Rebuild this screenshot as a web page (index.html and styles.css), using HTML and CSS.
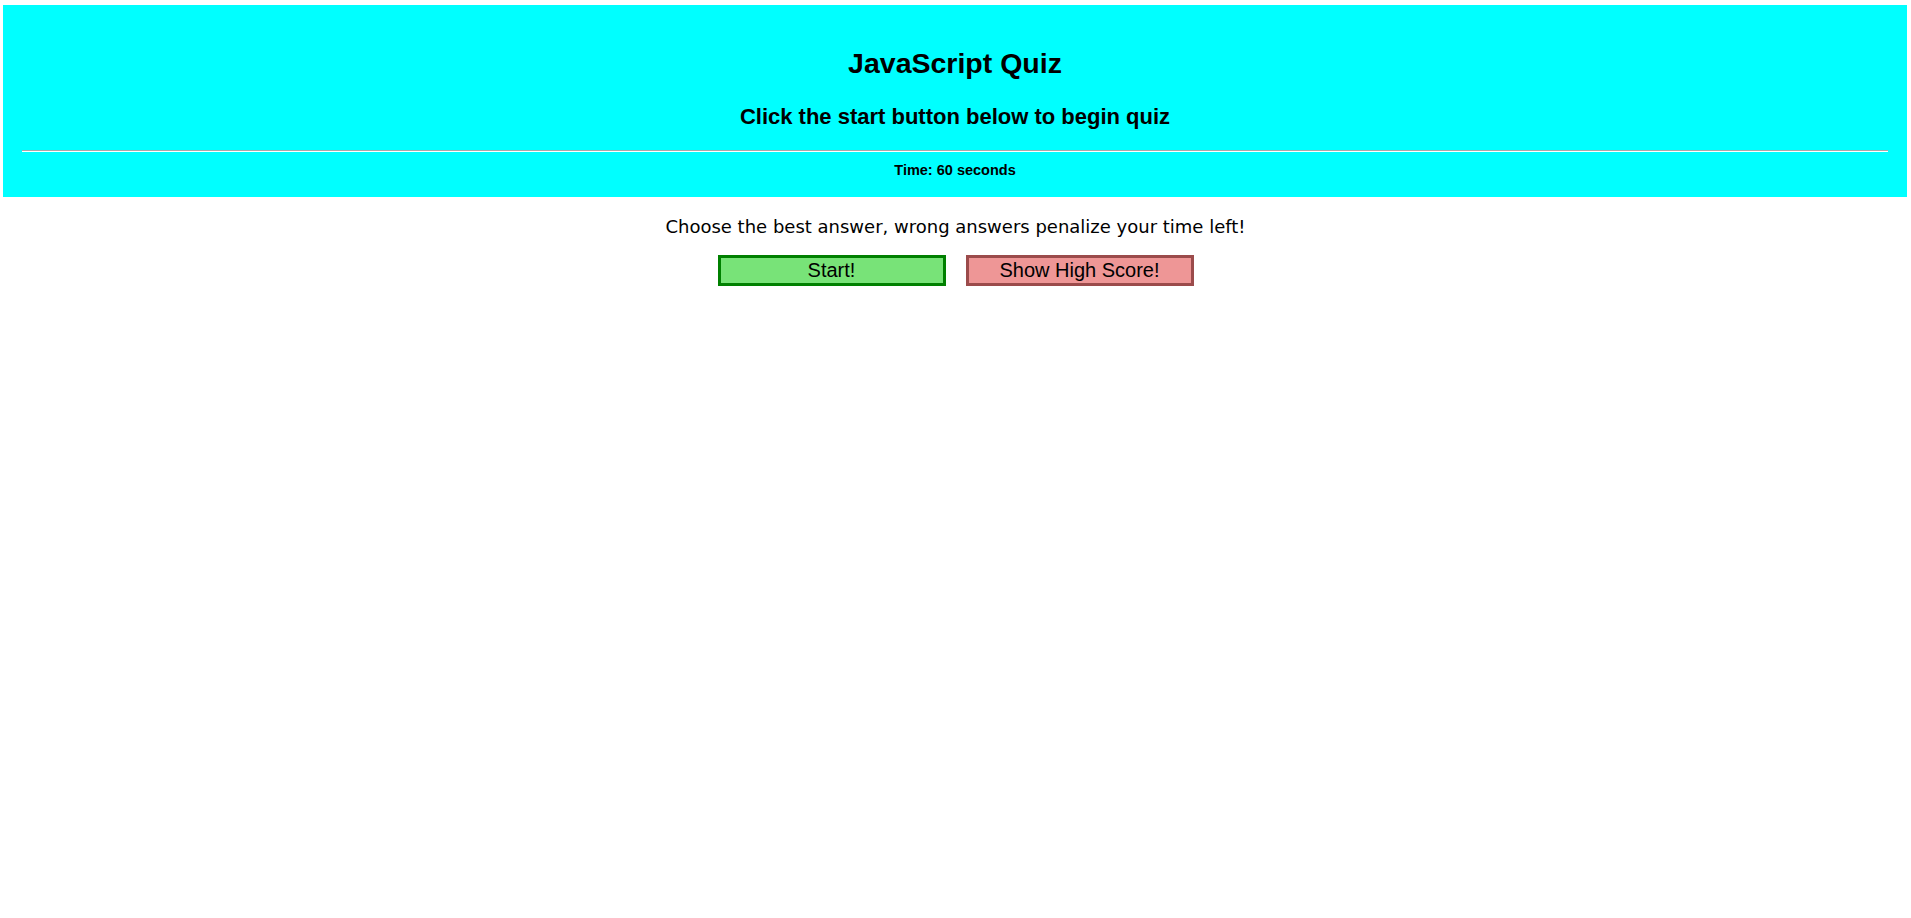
FILE: index.html
```html
<!DOCTYPE html>
<html lang="en">
<head>
<meta charset="utf-8">
<title>JavaScript Quiz</title>
<link rel="stylesheet" href="styles.css">
</head>
<body>
  <header class="banner">
    <h1 class="title">JavaScript Quiz</h1>
    <h2 class="subtitle">Click the start button below to begin quiz</h2>
    <hr class="rule">
    <div class="timer">Time: 60 seconds</div>
  </header>
  <main class="intro">
    <p class="instructions">Choose the best answer, wrong answers penalize your time left!</p>
    <div class="actions">
      <button class="btn btn-start">Start!</button>
      <button class="btn btn-score">Show High Score!</button>
    </div>
  </main>
</body>
</html>
```
FILE: styles.css
```css
html, body {
  margin: 0;
  padding: 0;
  background: #ffffff;
  color: #000000;
}

.banner {
  margin: 5px 4px 0 3px;
  padding: 40px 19px 18px;
  background: #00ffff;
  text-align: center;
  font-family: "Liberation Sans", Arial, sans-serif;
  font-weight: bold;
}

.title {
  margin: 0;
  font-size: 28.5px;
  line-height: 36px;
  font-weight: bold;
}

.subtitle {
  margin: 22px 0 0;
  font-size: 22px;
  line-height: 28px;
  font-weight: bold;
}

.rule {
  height: 0;
  margin: 19px 0 0;
  border: 0;
  border-top: 1px solid #a9a9a9;
  border-bottom: 1px solid #ffffff;
}

.timer {
  margin-top: 9px;
  font-size: 14.5px;
  line-height: 18px;
}

.intro {
  text-align: center;
}

.instructions {
  margin: 19px 0 0;
  font-family: "DejaVu Sans", Verdana, sans-serif;
  font-size: 18px;
  line-height: 22px;
}

.actions {
  display: flex;
  justify-content: center;
  gap: 20px;
  margin-top: 17px;
}

.btn {
  box-sizing: border-box;
  width: 228px;
  height: 31px;
  margin: 0;
  padding: 1px 0 2px;
  border: 3px solid;
  border-radius: 0;
  font-family: "Liberation Sans", Arial, sans-serif;
  font-size: 20px;
  line-height: 22px;
  color: #000000;
  cursor: pointer;
}

.btn-start {
  background: #78e378;
  border-color: #008000;
}

.btn-score {
  background: #ee9696;
  border-color: #9b4b4b;
}
```
